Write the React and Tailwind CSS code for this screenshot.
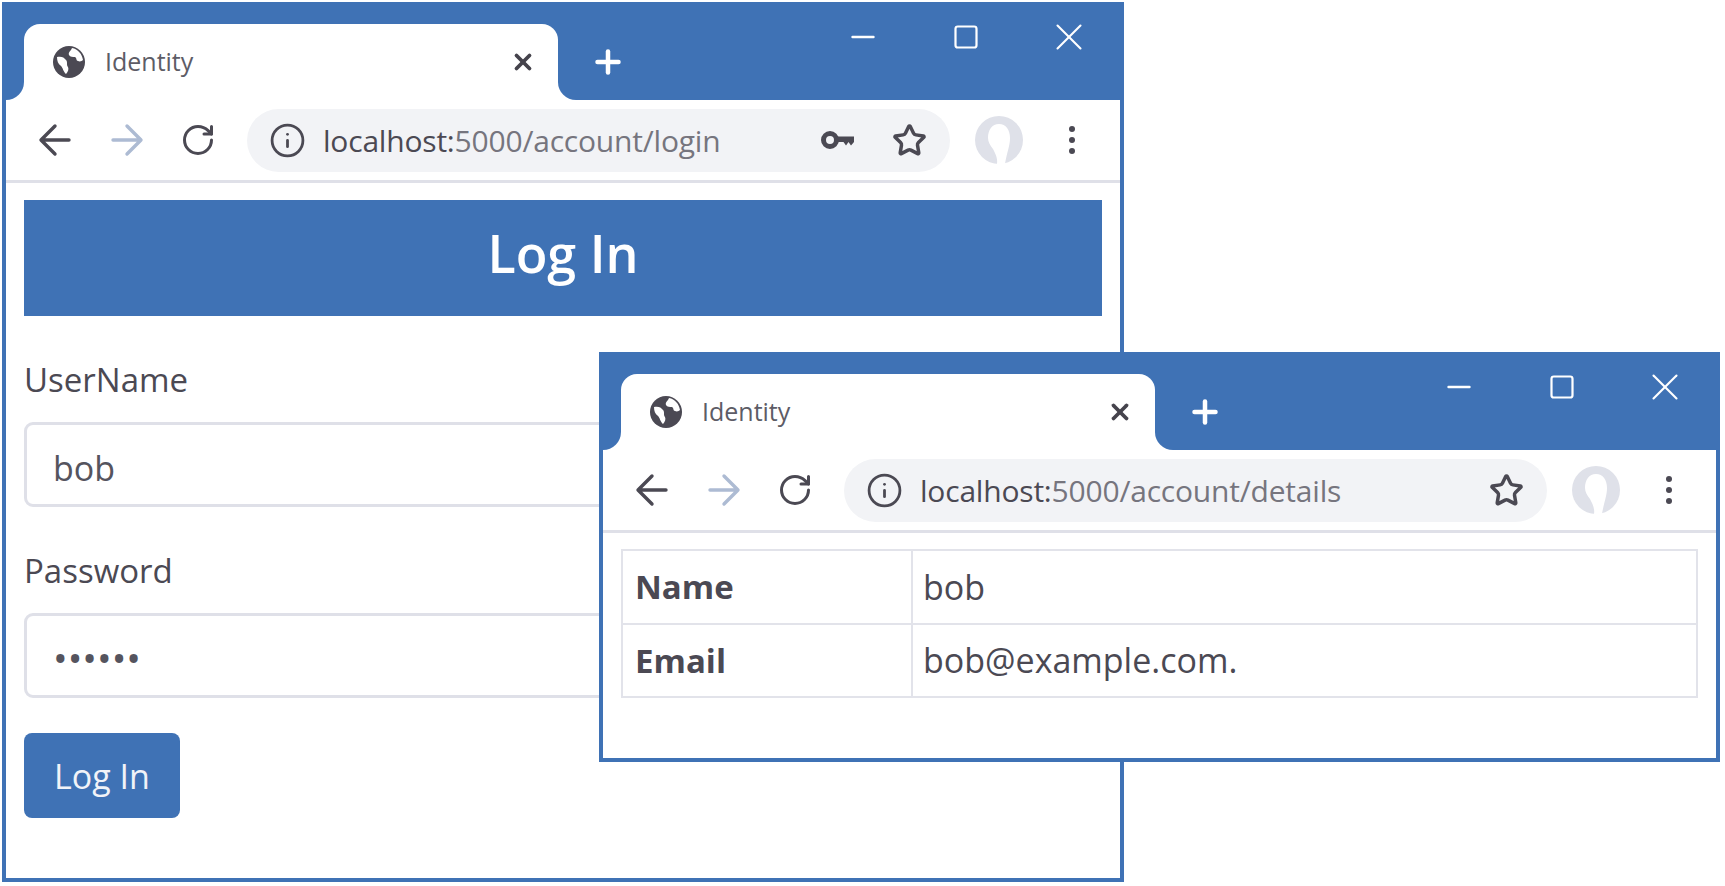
import { Info, Plus, RotateCw, Star, X, Minus, Square } from 'lucide-react';

function Globe() {
  return (
    <svg width="34" height="34" viewBox="0 0 34 34" className="shrink-0">
      <circle cx="17" cy="17" r="16" fill="#4b4953" />
      <path d="M5 12c4-1 7 0 9 3 2 2 0 5 2 7 1 2 0 5-2 7-3-3-3-6-5-8-3-2-4-5-4-9z" fill="#fff" />
      <path d="M20 3c-1 3-4 4-3 7 1 2 4 2 6 2 2 1 1 4 3 4 2 1 4 0 5-1-1-6-5-11-11-12z" fill="#fff" />
    </svg>
  );
}

function Arrow({ flip, className }) {
  return (
    <svg width="36" height="36" viewBox="0 0 36 36" fill="none" stroke="currentColor" strokeWidth="3.4" strokeLinecap="round" strokeLinejoin="round" className={className}>
      {flip ? <path d="M4 18h27M18 4l14 14-14 14" /> : <path d="M32 18H5M18 4 4 18l14 14" />}
    </svg>
  );
}

function KeyIcon() {
  return (
    <svg width="36" height="20" viewBox="0 0 36 20" className="block">
      <circle cx="10" cy="10" r="6.5" fill="none" stroke="#4b4953" strokeWidth="5" />
      <path d="M15 6.5h19v5.5l-3 3.5-2.5-3.5-2.5 3.5-2.5-3.5H15z" fill="#4b4953" />
    </svg>
  );
}

function Avatar() {
  return (
    <svg width="48" height="48" viewBox="0 0 48 48" className="block shrink-0">
      <circle cx="24" cy="24" r="24" fill="#dfe1e9" />
      <path d="M24 8c7 0 11 6 11 14 0 8-3 14-5 26h-8c1-6-2-11-4-15-3-4-5-7-5-11 0-8 4-14 11-14z" fill="#fff" />
    </svg>
  );
}

function BrowserWindow({ path, showKey, className, children }) {
  return (
    <div className={`absolute flex flex-col overflow-hidden border-4 border-[#3f72b5] bg-white ${className}`}>
      <div className="h-[18px] shrink-0 bg-[#3f72b5]" />
      {/* Tab strip */}
      <div className="flex h-[76px] shrink-0">
        <div className="w-[18px] bg-white">
          <div className="h-full rounded-br-[18px] bg-[#3f72b5]" />
        </div>
        <div className="w-[534px] bg-[#3f72b5]">
          <div className="flex h-full items-center rounded-t-[16px] bg-white pr-[22px] pl-[28px]">
            <Globe />
            <span className="ml-[19px] text-[25px] text-[#5d5c66]">Identity</span>
            <X size={26} strokeWidth={3.5} className="ml-auto text-[#45434c]" />
          </div>
        </div>
        <div className="flex-1 bg-white">
          <div className="relative flex h-full rounded-bl-[18px] bg-[#3f72b5] text-white">
            <Plus size={36} strokeWidth={3} className="mt-[20px] ml-[32px]" />
            <div className="absolute top-[-10px] right-[27px] flex items-center gap-[55px]">
              <span className="flex w-[48px] justify-center">
                <Minus size={36} strokeWidth={1.6} />
              </span>
              <span className="flex w-[48px] justify-center">
                <Square size={28} strokeWidth={1.9} />
              </span>
              <span className="flex w-[48px] justify-center">
                <X size={46} strokeWidth={1.1} />
              </span>
            </div>
          </div>
        </div>
      </div>
      {/* Toolbar */}
      <div className="flex h-[83px] shrink-0 items-center border-b-[3px] border-[#dfe0e8] pl-[31px] text-[#4b4953]">
        <Arrow />
        <Arrow flip className="ml-[36px] text-[#adbbd3]" />
        <span className="ml-[35px] flex w-[36px] justify-center">
          <RotateCw size={42} strokeWidth={2} />
        </span>
        <div className="ml-[31px] flex h-[63px] w-[703px] items-center rounded-full bg-[#f2f3f6] pr-[23px] pl-[22px]">
          <Info size={37} strokeWidth={1.8} className="shrink-0" />
          <span className="ml-[17px] text-[30px] tracking-[-0.2px] text-[#76757e]">
            <span className="text-[#4b4953]">localhost:</span>
            {path}
          </span>
          {showKey && (
            <span className="mr-[36px] ml-auto">
              <KeyIcon />
            </span>
          )}
          <Star size={35} strokeWidth={2.4} className={showKey ? 'shrink-0' : 'ml-auto shrink-0'} />
        </div>
        <span className="ml-[25px]">
          <Avatar />
        </span>
        <div className="ml-[46px] flex flex-col gap-[5px]">
          <span className="h-[6px] w-[6px] rounded-full bg-[#4b4953]" />
          <span className="h-[6px] w-[6px] rounded-full bg-[#4b4953]" />
          <span className="h-[6px] w-[6px] rounded-full bg-[#4b4953]" />
        </div>
      </div>
      {children}
    </div>
  );
}

function Field({ label, children, className }) {
  return (
    <div className={className}>
      <label className="block text-[33px] leading-[44px] text-[#4b4953]">{label}</label>
      <div className="mt-[20px] flex h-[85px] items-center rounded-[9px] border-[3px] border-[#dfe0e8] px-[26px] text-[#55545e]">
        {children}
      </div>
    </div>
  );
}

export default function App() {
  return (
    <div className="relative h-[886px] w-[1725px] overflow-hidden bg-white font-['Open_Sans',sans-serif]">
      <BrowserWindow path="5000/account/login" showKey className="top-[2px] left-[2px] h-[880px] w-[1122px]">
        <div className="px-[18px] pt-[17px]">
          <div className="flex h-[116px] w-[1078px] items-center justify-center bg-[#3f72b5] pb-[10px] text-[52px] font-semibold text-white">
            Log In
          </div>
          <Field label="UserName" className="mt-[42px] w-[1078px]">
            <span className="pt-[7px] text-[34px]">bob</span>
          </Field>
          <Field label="Password" className="mt-[42px] w-[1078px]">
            <span className="pt-[6px] text-[39px]">••••••</span>
          </Field>
          <button className="mt-[35px] flex h-[85px] w-[156px] items-center justify-center rounded-[8px] bg-[#3f72b5] pt-[2px] text-[34px] text-[#f1f3f8]">
            Log In
          </button>
        </div>
      </BrowserWindow>

      <BrowserWindow path="5000/account/details" className="top-[352px] left-[599px] h-[410px] w-[1121px]">
        <div className="px-[18px] pt-[16px]">
          <table className="w-[1077px] table-fixed border-collapse text-[#4b4953]">
            <tbody>
              <tr className="h-[74px]">
                <td className="w-[290px] border-2 border-[#e2e3ea] pl-[12px] text-[33px] font-bold">Name</td>
                <td className="border-2 border-[#e2e3ea] pl-[10px] text-[34px]">bob</td>
              </tr>
              <tr className="h-[73px]">
                <td className="w-[290px] border-2 border-[#e2e3ea] pl-[12px] text-[33px] font-bold">Email</td>
                <td className="border-2 border-[#e2e3ea] pl-[10px] text-[34px]">bob@example.com.</td>
              </tr>
            </tbody>
          </table>
        </div>
      </BrowserWindow>
    </div>
  );
}
